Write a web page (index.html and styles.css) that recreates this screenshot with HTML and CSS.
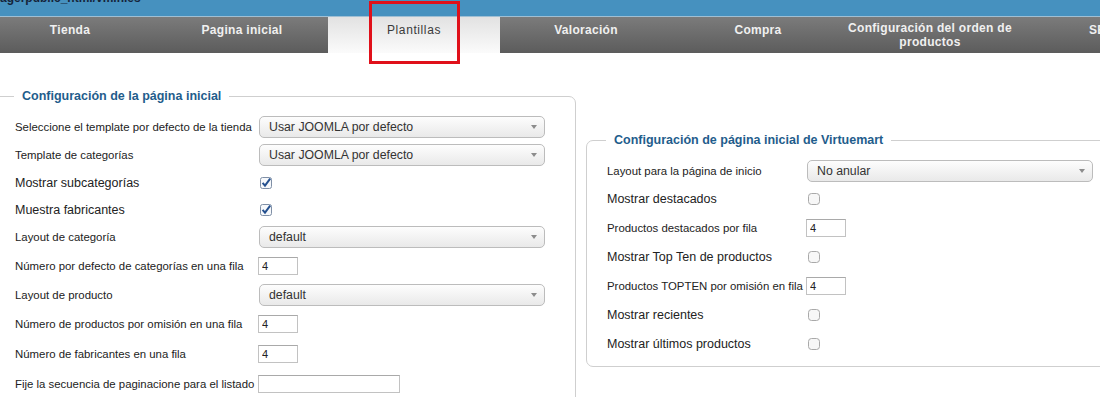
FILE: index.html
```html
<!DOCTYPE html>
<html lang="es">
<head>
<meta charset="utf-8">
<title>Configuración - Plantillas</title>
<link rel="stylesheet" href="styles.css">
</head>
<body>
<div class="path-bar"><span class="path">agerpublic_html/vminies</span></div>
<nav class="tabs">
  <div class="tab">Tienda</div>
  <div class="tab">Pagina inicial</div>
  <div class="tab active">Plantillas</div>
  <div class="tab">Valoración</div>
  <div class="tab">Compra</div>
  <div class="tab two">Configuración del orden de productos</div>
  <div class="tab">SEO</div>
</nav>
<div class="annot"></div>
<main class="content">
  <fieldset class="panel panel-left">
    <legend>Configuración de la página inicial</legend>
    <div class="row r-sel">
      <span class="lbl">Seleccione el template por defecto de la tienda</span>
      <div class="select"><span>Usar JOOMLA por defecto</span><i class="arrow"></i></div>
    </div>
    <div class="row r-sel">
      <span class="lbl">Template de categorías</span>
      <div class="select"><span>Usar JOOMLA por defecto</span><i class="arrow"></i></div>
    </div>
    <div class="row r-chk">
      <span class="lbl big">Mostrar subcategorías</span>
      <span class="chk"><svg width="12" height="12" viewBox="0 0 12 12"><rect x="0.5" y="0.5" width="11" height="11" rx="2" fill="#f6f8fb" stroke="#7f8fa6"/><path d="M2.6 5.8 L5 8.6 L10.2 1.6" fill="none" stroke="#24508f" stroke-width="2"/></svg></span>
    </div>
    <div class="row r-chk">
      <span class="lbl big">Muestra fabricantes</span>
      <span class="chk"><svg width="12" height="12" viewBox="0 0 12 12"><rect x="0.5" y="0.5" width="11" height="11" rx="2" fill="#f6f8fb" stroke="#7f8fa6"/><path d="M2.6 5.8 L5 8.6 L10.2 1.6" fill="none" stroke="#24508f" stroke-width="2"/></svg></span>
    </div>
    <div class="row r-sel">
      <span class="lbl">Layout de categoría</span>
      <div class="select"><span>default</span><i class="arrow"></i></div>
    </div>
    <div class="row r-num">
      <span class="lbl">Número por defecto de categorías en una fila</span>
      <input class="num" type="text" value="4">
    </div>
    <div class="row r-sel">
      <span class="lbl">Layout de producto</span>
      <div class="select"><span>default</span><i class="arrow"></i></div>
    </div>
    <div class="row r-num">
      <span class="lbl">Número de productos por omisión en una fila</span>
      <input class="num" type="text" value="4">
    </div>
    <div class="row r-num">
      <span class="lbl">Número de fabricantes en una fila</span>
      <input class="num" type="text" value="4">
    </div>
    <div class="row r-num">
      <span class="lbl">Fije la secuencia de paginacione para el listado</span>
      <input class="num wide" type="text" value="">
    </div>
  </fieldset>

  <fieldset class="panel panel-right">
    <legend>Configuración de página inicial de Virtuemart</legend>
    <div class="row r-first">
      <span class="lbl">Layout para la página de inicio</span>
      <div class="select"><span>No anular</span><i class="arrow"></i></div>
    </div>
    <div class="row r-29">
      <span class="lbl big">Mostrar destacados</span>
      <span class="chk"><svg width="12" height="12" viewBox="0 0 12 12"><rect x="0.5" y="0.5" width="11" height="11" rx="3" fill="#f7f7f7" stroke="#a9a9a9"/></svg></span>
    </div>
    <div class="row r-29">
      <span class="lbl">Productos destacados por fila</span>
      <input class="num" type="text" value="4">
    </div>
    <div class="row r-29">
      <span class="lbl big">Mostrar Top Ten de productos</span>
      <span class="chk"><svg width="12" height="12" viewBox="0 0 12 12"><rect x="0.5" y="0.5" width="11" height="11" rx="3" fill="#f7f7f7" stroke="#a9a9a9"/></svg></span>
    </div>
    <div class="row r-29">
      <span class="lbl">Productos TOPTEN por omisión en fila</span>
      <input class="num" type="text" value="4">
    </div>
    <div class="row r-29">
      <span class="lbl big">Mostrar recientes</span>
      <span class="chk"><svg width="12" height="12" viewBox="0 0 12 12"><rect x="0.5" y="0.5" width="11" height="11" rx="3" fill="#f7f7f7" stroke="#a9a9a9"/></svg></span>
    </div>
    <div class="row r-29">
      <span class="lbl big">Mostrar últimos productos</span>
      <span class="chk"><svg width="12" height="12" viewBox="0 0 12 12"><rect x="0.5" y="0.5" width="11" height="11" rx="3" fill="#f7f7f7" stroke="#a9a9a9"/></svg></span>
    </div>
  </fieldset>
</main>
</body>
</html>
```

FILE: styles.css
```css
html, body {
  margin: 0;
  padding: 0;
  overflow: hidden;
  background: #fff;
  font-family: "Liberation Sans", Arial, sans-serif;
  color: #222;
}

.path-bar {
  height: 16px;
  background: #4691bf;
  border-bottom: 1px solid #9fbfd4;
  overflow: hidden;
}

.path {
  display: block;
  margin-top: -8px;
  font-size: 12px;
  font-weight: bold;
  line-height: 12px;
  color: #15243a;
}

.tabs {
  display: flex;
  height: 36px;
  margin-left: -16px;
  background: linear-gradient(#7b7b7b, #5c5c5c);
}

.tab {
  flex: 0 0 172px;
  box-sizing: border-box;
  padding: 6px 2px 0;
  text-align: center;
  font-size: 12px;
  line-height: 14px;
  font-weight: bold;
  letter-spacing: 0.3px;
  color: #f0f0f0;
}

.tab.two {
  padding-top: 4px;
}

.tab.active {
  background: linear-gradient(#e2e2e2, #fbfbfb);
  color: #3a3a3a;
  font-weight: normal;
  letter-spacing: 0.6px;
}

.annot {
  position: absolute;
  left: 369px;
  top: 1px;
  width: 85px;
  height: 57px;
  border: 3px solid #e0101a;
}

.content {
  display: flex;
  align-items: flex-start;
}

.panel {
  flex: 0 0 auto;
  box-sizing: border-box;
  margin: 0;
  border: 1px solid #cfcfcf;
  border-radius: 7px;
}

.panel legend {
  margin-left: -1px;
  padding: 0 8px;
  font-size: 12.5px;
  line-height: 16px;
  font-weight: bold;
  color: #1f5d8c;
}

.panel-left {
  width: 586px;
  margin-left: -10px;
  margin-top: 35px;
  padding: 9px 0 20px 24px;
}

.panel-right {
  width: 540px;
  margin-left: 10px;
  margin-top: 79px;
  padding: 9px 0 8px 20px;
}

.row {
  display: grid;
  align-items: center;
}

.panel-left .row {
  grid-template-columns: 244px auto;
}

.panel-right .row {
  grid-template-columns: 200px auto;
}

.r-sel { height: 28px; }
.r-chk { height: 27px; }
.r-num { height: 30px; }
.r-first { height: 27px; }
.r-29 { height: 29px; }

.lbl {
  font-size: 11.4px;
  line-height: 14px;
  color: #222;
  white-space: nowrap;
}

.lbl.big {
  font-size: 12.5px;
}

.select {
  box-sizing: border-box;
  width: 286px;
  height: 22px;
  display: flex;
  align-items: center;
  justify-content: space-between;
  padding: 0 7px 0 9px;
  border: 1px solid #bcbcbc;
  border-radius: 5px;
  background: linear-gradient(#fdfdfd, #e9e9e9);
  font-size: 12.3px;
  color: #333;
}

.arrow {
  width: 0;
  height: 0;
  border-left: 3.5px solid transparent;
  border-right: 3.5px solid transparent;
  border-top: 4px solid #8c8c8c;
}

.chk {
  display: flex;
  margin-left: 1px;
  width: 12px;
  height: 12px;
}

.num {
  box-sizing: border-box;
  width: 40px;
  height: 18px;
  margin: 0 0 0 -1px;
  padding: 0 3px;
  border: 1px solid #c2c2c2;
  border-top-color: #a9a9a9;
  border-radius: 0;
  font-family: "Liberation Sans", Arial, sans-serif;
  font-size: 11px;
  color: #222;
  background: #fff;
}

.num.wide {
  width: 142px;
}
```
